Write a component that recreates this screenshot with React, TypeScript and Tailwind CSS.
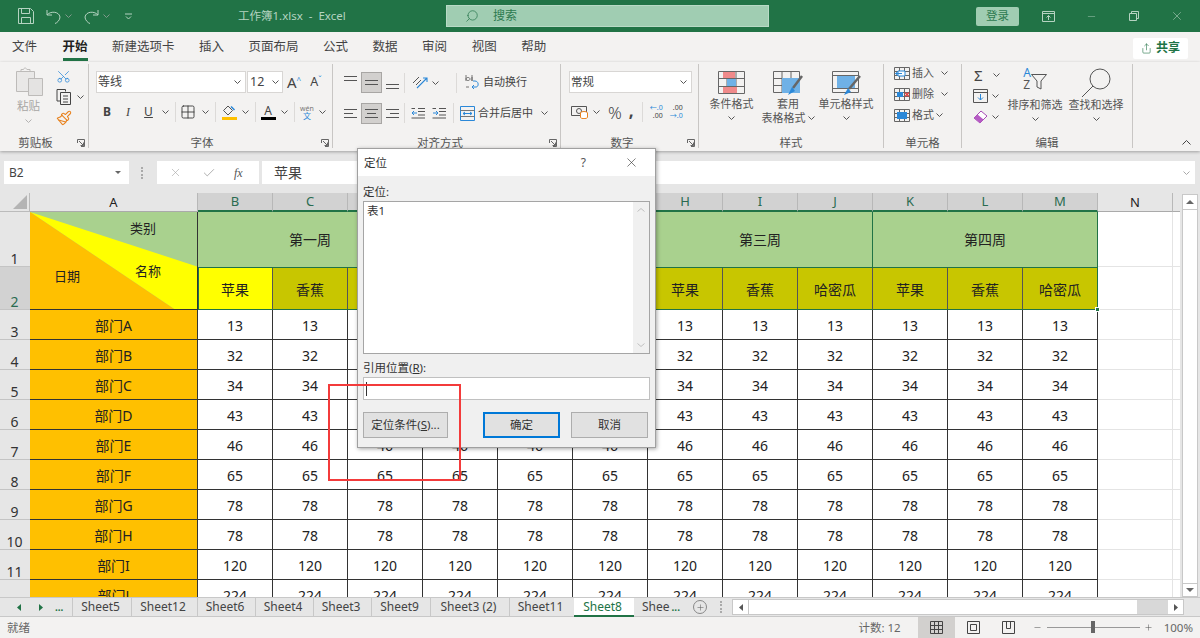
import type { ReactNode } from "react";
import { Scissors, Paintbrush, Grid2x2, Search, Minus, X, Plus, Share, Check } from "lucide-react";

const colLetters = ["B", "C", "D", "E", "F", "G", "H", "I", "J", "K", "L", "M"];
const fruits = ["苹果", "香蕉", "哈密瓜"];
const rows = [
  ["部门A", "13"],
  ["部门B", "32"],
  ["部门C", "34"],
  ["部门D", "43"],
  ["部门E", "46"],
  ["部门F", "65"],
  ["部门G", "78"],
  ["部门H", "78"],
  ["部门I", "120"],
  ["部门J", "224"],
];
const tabs = [
  ["Sheet5", "w-[59px]"],
  ["Sheet12", "w-[66px]"],
  ["Sheet6", "w-[58px]"],
  ["Sheet4", "w-[58px]"],
  ["Sheet3", "w-[58px]"],
  ["Sheet9", "w-[59px]"],
  ["Sheet3 (2)", "w-[79px]"],
  ["Sheet11", "w-[65px]"],
];

const Chev = ({ className = "" }: { className?: string }) => (
  <svg width="7" height="4" viewBox="0 0 7 4" className={`shrink-0 ${className}`} fill="none" stroke="#555" strokeWidth="1">
    <path d="M.5.5 3.5 3.5 6.5.5" />
  </svg>
);

const Launcher = () => (
  <svg width="8" height="8" viewBox="0 0 8 8" className="absolute right-[3px] bottom-[1px]" fill="none" stroke="#666" strokeWidth="1">
    <path d="M.5 4V.5H7.5V7.5H4M2 2 6.5 6.5M6.5 3.5V6.5H3.5" />
  </svg>
);

const Group = ({ className, labelClass = "", label, launcher, children }: { className: string; labelClass?: string; label: string; launcher?: boolean; children: ReactNode }) => (
  <div className={`relative h-[84px] shrink-0 border-r border-[#c8c6c4] flex flex-col ${className}`}>
    <div className="h-[71px] shrink-0">{children}</div>
    <div className={`text-[11.5px] leading-[15px] text-center text-[#555] ${labelClass}`}>{label}</div>
    {launcher && <Launcher />}
  </div>
);

const VSep = ({ className = "" }: { className?: string }) => <div className={`w-px h-[20px] bg-[#dcdad8] shrink-0 ${className}`} />;

const Lines = ({ kind }: { kind: "left" | "center" | "right" | "top" | "mid" | "bottom" }) => {
  const d = {
    left: "M1 3.5H14M1 7.5H10M1 11.5H14",
    center: "M1 3.5H14M3 7.5H12M1 11.5H14",
    right: "M1 3.5H14M5 7.5H14M1 11.5H14",
    top: "M1 1.5H14M1 5.5H14",
    mid: "M1 5.5H14M1 9.5H14",
    bottom: "M1 9.5H14M1 13.5H14",
  }[kind];
  return (
    <svg width="15" height="15" viewBox="0 0 15 15" fill="none" stroke="#555" strokeWidth="1.1">
      <path d={d} />
    </svg>
  );
};

const AlignBtn = ({ kind, on }: { kind: "left" | "center" | "right" | "top" | "mid" | "bottom"; on?: boolean }) => (
  <div className={`w-[21px] h-[21px] flex items-center justify-center border ${on ? "bg-[#d2d0ce] border-[#a8a6a4]" : "border-transparent"}`}>
    <Lines kind={kind} />
  </div>
);

const CellIcon = ({ type }: { type: "insert" | "delete" | "format" }) => (
  <svg width="16" height="15" viewBox="0 0 16 15" fill="none" className="shrink-0">
    <path d="M.5 1.5H15.5V13.5H.5ZM.5 5.5H15.5M.5 9.5H15.5M5.5 1.5V13.5M10.5 1.5V13.5" stroke="#666" />
    {type === "insert" && <path d="M4 5H11V10H4Z" fill="#fff" stroke="#2b88d8" />}
    {type === "insert" && <path d="M8 7.5H1.5M4 5.5 1.5 7.5 4 9.5" stroke="#2b88d8" />}
    {type === "delete" && <rect x="3" y="5" width="6" height="5" fill="#2b88d8" />}
    {type === "delete" && <path d="M11 5.5 15 9.5M15 5.5 11 9.5" stroke="#e03a3a" strokeWidth="1.3" />}
    {type === "format" && <rect x="3" y="4" width="10" height="7" fill="#2b88d8" />}
  </svg>
);

const Ribbon = () => (
  <div className="h-[89px] bg-[#f3f2f1] flex items-start pt-[2px] shadow-[0_1px_3px_rgba(0,0,0,0.3)] relative z-10 shrink-0">
    <Group className="w-[89px]" labelClass="pr-[17px]" label="剪贴板" launcher>
      <div className="flex pt-[3px]">
        <div className="w-[56px] flex flex-col items-center pl-[1px]">
          <svg width="28" height="30" viewBox="0 0 28 30" fill="none">
            <path d="M1.5 4.5H19.5V24.5H1.5Z" fill="#e9e8e7" stroke="#bdbbb9" />
            <path d="M6 4.5H15V2.5H12C11 .5 9 .5 8.5 2.5H6Z" fill="#f3f2f1" stroke="#bdbbb9" />
            <path d="M13.5 11.5H27.5V28.5H13.5Z" fill="#e4e3e2" stroke="#bdbbb9" />
          </svg>
          <div className="text-[11.5px] text-[#a8a6a4] mt-[1px] leading-[16px]">粘贴</div>
          <Chev className="mt-[5px] opacity-40" />
        </div>
        <div className="flex flex-col items-start pt-[2px] gap-[5px]">
          <Scissors size={15} strokeWidth={1.2} className="text-[#2b88d8] -rotate-90" />
          <div className="flex items-center gap-[6px]">
            <svg width="15" height="16" viewBox="0 0 15 16" fill="none" stroke="#444">
              <path d="M9.5 2.5V.5H1V12H4M4.5 3.5H14.5V15.5H4.5ZM7 7H12M7 10H12M7 13H12" />
            </svg>
            <Chev />
          </div>
          <Paintbrush size={16} strokeWidth={1.6} className="text-[#e8821e]" />
        </div>
      </div>
    </Group>

    <Group className="w-[244px]" labelClass="pr-[17px]" label="字体" launcher>
      <div className="flex items-center pt-[7px] pl-[7px]">
        <div className="w-[150px] h-[22px] bg-white border border-[#d8d6d4] flex items-center justify-between px-[1px] pr-[4px] text-[12px] text-[#444]">
          <span>等线</span>
          <Chev />
        </div>
        <div className="w-[36px] h-[22px] ml-[1px] bg-white border border-[#d8d6d4] flex items-center justify-between pl-[2px] pr-[3px] text-[12.5px] text-[#444]">
          <span>12</span>
          <Chev />
        </div>
        <span className="ml-[4px] text-[15px] leading-none text-[#444]">A</span>
        <span className="text-[8px] text-[#2b88d8] self-start mt-[3px] mr-[6px]">^</span>
        <span className="ml-[3px] text-[12.5px] leading-none text-[#444]">A</span>
        <span className="text-[8px] text-[#2b88d8] self-start mt-[3px]">ˇ</span>
      </div>
      <div className="flex items-center h-[22px] mt-[8px] text-[#444]">
        <span className="ml-[13px] w-[10px] text-center text-[12px] font-bold">B</span>
        <span className="ml-[11px] w-[10px] text-center text-[12px] italic font-['Liberation_Serif',serif]">I</span>
        <span className="ml-[10px] w-[11px] text-center text-[12px] underline">U</span>
        <Chev className="ml-[8px]" />
        <VSep className="ml-[6px]" />
        <Grid2x2 size={16} strokeWidth={1.3} className="ml-[4px] text-[#333]" />
        <Chev className="ml-[6px]" />
        <VSep className="ml-[6px]" />
        <div className="ml-[5px] w-[16px] flex flex-col items-center">
          <svg width="14" height="11" viewBox="0 0 14 11" fill="none">
            <path d="M6 1 1.5 5.5 6 10 10.5 5.5Z" stroke="#555" />
            <path d="M9 1.5 12.5 5" stroke="#2b88d8" strokeWidth="1.6" />
          </svg>
          <div className="w-[15px] h-[3px] bg-[#ffc000] mt-[1px]" />
        </div>
        <Chev className="ml-[5px]" />
        <VSep className="ml-[6px]" />
        <div className="ml-[4px] w-[16px] flex flex-col items-center">
          <span className="text-[12px] leading-[12px]">A</span>
          <div className="w-[15px] h-[3px] bg-black" />
        </div>
        <Chev className="ml-[5px]" />
        <VSep className="ml-[6px]" />
        <div className="ml-[5px] w-[14px] flex flex-col items-center leading-none">
          <span className="text-[7px] text-[#777]">wén</span>
          <span className="text-[8px] text-[#2b88d8]">文</span>
        </div>
        <Chev className="ml-[5px]" />
      </div>
    </Group>

    <Group className="w-[228px]" labelClass="pr-[13px]" label="对齐方式" launcher>
      <div className="flex items-center pt-[8px] pl-[7px] h-[29px]">
        <AlignBtn kind="top" />
        <AlignBtn kind="mid" on />
        <AlignBtn kind="bottom" />
        <VSep className="ml-[1px]" />
        <svg width="17" height="15" viewBox="0 0 17 15" fill="none" className="ml-[7px]">
          <path d="M1 8 7 2M4 10 9 5" stroke="#555" />
          <path d="M5 13 15 3M11 3H15V7" stroke="#2b88d8" strokeWidth="1.1" />
        </svg>
        <Chev className="ml-[3px]" />
        <VSep className="ml-[17px]" />
        <svg width="14" height="17" viewBox="0 0 14 17" fill="none" className="ml-[8px]">
          <path d="M1 1V7M1 5C1 3 5 3 5 5S1 7 1 5M7 3V7M7 1V7M1 13H4" stroke="#555" strokeWidth=".8" />
          <path d="M7 13H11C14 13 14 7 10 7H8M9 11 7 13 9 15" stroke="#2b88d8" />
        </svg>
        <span className="ml-[4px] text-[11px] text-[#444]">自动换行</span>
      </div>
      <div className="flex items-center pl-[7px] h-[22px] mt-[9px]">
        <AlignBtn kind="left" />
        <AlignBtn kind="center" on />
        <AlignBtn kind="right" />
        <VSep className="ml-[1px]" />
        <svg width="15" height="13" viewBox="0 0 15 13" fill="none" className="ml-[6px]">
          <path d="M7 1.5H14M7 4.5H14M7 8H14M.5 11H14M.5 1.5H4" stroke="#555" />
          <path d="M6 6H1M3 4 1 6 3 8" stroke="#2b88d8" />
        </svg>
        <svg width="15" height="13" viewBox="0 0 15 13" fill="none" className="ml-[6px]">
          <path d="M7 1.5H14M7 4.5H14M7 8H14M.5 11H14M.5 1.5H4" stroke="#555" />
          <path d="M1 6H6M4 4 6 6 4 8" stroke="#2b88d8" />
        </svg>
        <VSep className="ml-[6px]" />
        <svg width="15" height="15" viewBox="0 0 15 15" fill="none" className="ml-[6px]">
          <path d="M.5.5H14.5V14.5H.5Z" stroke="#2b88d8" />
          <path d="M.5 4.5H14.5M.5 10.5H14.5" stroke="#777" />
          <path d="M3 7.5H12M5 6 3 7.5 5 9M10 6 12 7.5 10 9" stroke="#2b88d8" />
        </svg>
        <span className="ml-[3px] text-[11px] text-[#444]">合并后居中</span>
        <Chev className="ml-[8px]" />
      </div>
    </Group>

    <Group className="w-[138px]" labelClass="pr-[15px]" label="数字" launcher>
      <div className="pt-[7px] pl-[8px]">
        <div className="w-[123px] h-[22px] bg-white border border-[#d8d6d4] flex items-center justify-between pl-[1px] pr-[4px] text-[11.5px] text-[#444]">
          <span>常规</span>
          <Chev />
        </div>
      </div>
      <div className="flex items-center h-[22px] mt-[8px] pl-[10px] text-[#444]">
        <svg width="17" height="14" viewBox="0 0 17 14" fill="none">
          <path d="M.5 1.5H15.5V10.5H.5Z" stroke="#555" />
          <circle cx="8" cy="6" r="2.5" stroke="#555" />
          <ellipse cx="13" cy="8" rx="3.5" ry="1.5" fill="#fff" stroke="#e8821e" />
          <path d="M9.5 8V12.5C10 14 16 14 16.5 12.5V8" fill="#fff" stroke="#e8821e" />
        </svg>
        <Chev className="ml-[5px]" />
        <span className="ml-[8px] text-[17px] leading-none font-light">%</span>
        <span className="ml-[7px] text-[17px] font-bold leading-none -mt-[4px]">,</span>
        <VSep className="ml-[8px]" />
        <span className="ml-[5px] flex flex-col text-[7px] leading-[8px] w-[15px] text-right">
          <span className="text-[#2b88d8]">←.0</span>
          <span>.00</span>
        </span>
        <span className="ml-[5px] flex flex-col text-[7px] leading-[8px] w-[15px] text-right">
          <span>.00</span>
          <span className="text-[#2b88d8]">→.0</span>
        </span>
      </div>
    </Group>

    <Group className="w-[185px]" label="样式">
      <div className="flex text-[11px] text-[#555] leading-[14px]">
        <div className="w-[62px] flex flex-col items-center pt-[7px] pl-[3px]">
          <svg width="27" height="23" viewBox="0 0 27 23" fill="none">
            <path d="M.5.5H26.5V22.5H.5ZM.5 7.5H26.5M.5 15.5H26.5M9 .5V22.5M18 .5V22.5" stroke="#666" />
            <rect x="5" y="1" width="12" height="6" fill="#f08a8a" />
            <rect x="9" y="8" width="9" height="7" fill="#6fb1e6" />
            <rect x="5" y="16" width="14" height="6" fill="#f08a8a" />
          </svg>
          <div className="mt-[3px]">条件格式</div>
          <Chev className="mt-[5px]" />
        </div>
        <div className="w-[54px] flex flex-col items-center pt-[7px]">
          <svg width="31" height="25" viewBox="0 0 31 25" fill="none">
            <path d="M.5.5H26.5V21.5H.5ZM.5 7.5H26.5M.5 14.5H26.5M9 .5V21.5M18 .5V21.5" stroke="#666" />
            <rect x="9" y="7" width="18" height="15" fill="#6fb1e6" />
            <path d="M29 5 20 17" stroke="#666" strokeWidth="2.5" />
            <path d="M19 16 15 24 22 20Z" fill="#2b88d8" />
          </svg>
          <div className="mt-[1px] whitespace-nowrap">套用</div>
          <div className="whitespace-nowrap flex items-center gap-[2px]">表格格式<Chev /></div>
        </div>
        <div className="w-[62px] flex flex-col items-center pt-[7px]">
          <svg width="29" height="25" viewBox="0 0 29 25" fill="none">
            <path d="M.5.5H26.5V21.5H.5ZM.5 4.5H26.5M.5 17.5H26.5" stroke="#666" />
            <rect x="5" y="5" width="18" height="12" fill="#6fb1e6" />
            <path d="M28 5 17 18" stroke="#666" strokeWidth="2.5" />
            <path d="M16 17 12 24 19 21Z" fill="#2b88d8" />
          </svg>
          <div className="mt-[1px] whitespace-nowrap">单元格样式</div>
          <Chev className="mt-[5px]" />
        </div>
      </div>
    </Group>

    <Group className="w-[78px]" label="单元格">
      <div className="flex flex-col pl-[10px] pt-[1px] gap-[5px] text-[11px] text-[#555] leading-[16px]">
        <div className="flex items-center">
          <CellIcon type="insert" />
          <span className="ml-[2px]">插入</span>
          <Chev className="ml-[7px]" />
        </div>
        <div className="flex items-center">
          <CellIcon type="delete" />
          <span className="ml-[2px]">删除</span>
          <Chev className="ml-[7px]" />
        </div>
        <div className="flex items-center">
          <CellIcon type="format" />
          <span className="ml-[2px]">格式</span>
          <Chev className="ml-[2px]" />
        </div>
      </div>
    </Group>

    <Group className="w-[171px]" label="编辑">
      <div className="flex">
        <div className="w-[43px] flex flex-col pl-[11px] pt-[2px] gap-[3px]">
          <div className="flex items-center h-[18px] gap-[5px]">
            <span className="text-[15px] text-[#444] leading-none w-[14px] ml-[1px]">Σ</span>
            <Chev />
          </div>
          <div className="flex items-center h-[18px] gap-[4px]">
            <svg width="15" height="14" viewBox="0 0 15 14" fill="none">
              <path d="M.5.5H14.5V13.5H.5ZM.5 3.5H14.5" stroke="#555" />
              <path d="M7.5 5V11M5 8.5 7.5 11 10 8.5" stroke="#2b88d8" />
            </svg>
            <Chev />
          </div>
          <div className="flex items-center h-[18px] gap-[4px]">
            <svg width="15" height="14" viewBox="0 0 15 14" fill="none">
              <path d="M1 8 8 1 14 6 7 13Z" fill="#fff" stroke="#a64ab5" />
              <path d="M1 8 4.5 4.5 10.5 9.5 7 13Z" fill="#b65cc4" />
            </svg>
            <Chev />
          </div>
        </div>
        <div className="w-[60px] flex flex-col items-center pt-[4px] text-[11px] text-[#555] leading-[14px]">
          <div className="flex items-start h-[30px]">
            <div className="flex flex-col text-[12px] leading-[12px] -mt-[1px]">
              <span className="text-[#2b88d8]">A</span>
              <span>Z</span>
            </div>
            <svg width="16" height="16" viewBox="0 0 16 16" fill="none" stroke="#555" className="mt-[6px]">
              <path d="M.5.5H15.5L10 7V15L6 13V7Z" />
            </svg>
          </div>
          <div className="whitespace-nowrap">排序和筛选</div>
          <Chev className="mt-[5px]" />
        </div>
        <div className="w-[62px] flex flex-col items-center pt-[4px] text-[11px] text-[#555] leading-[14px]">
          <svg width="30" height="30" viewBox="0 0 30 30" fill="none" stroke="#555">
            <circle cx="19" cy="11" r="10" />
            <path d="M12 18 1 29" />
          </svg>
          <div className="whitespace-nowrap">查找和选择</div>
          <Chev className="mt-[5px]" />
        </div>
      </div>
    </Group>

    <div className="flex-1 h-[84px] flex items-end justify-end pr-[9px] pb-[3px]">
      <svg width="9" height="5" viewBox="0 0 9 5" fill="none" stroke="#444">
        <path d="M.5 4.5 4.5.5 8.5 4.5" />
      </svg>
    </div>
  </div>
);

const FormulaBar = () => (
  <div className="h-[42px] bg-[#e6e6e6] flex items-center pl-[4px] pt-[1px] shrink-0 text-[#444]">
    <div className="w-[125px] h-[23px] bg-white flex items-center justify-between pl-[5px] pr-[8px] text-[12px]">
      <span>B2</span>
      <svg width="6" height="3" viewBox="0 0 6 3"><path d="M0 0H6L3 3Z" fill="#666" /></svg>
    </div>
    <div className="ml-[12px] w-[2px] h-[12px] border-l-2 border-dotted border-[#aaa]" />
    <div className="ml-[14px] w-[102px] h-[23px] bg-white flex items-center pl-[12px]">
      <X size={13} strokeWidth={1.2} className="text-[#aaa]" />
      <Check size={14} strokeWidth={1.6} className="ml-[20px] text-[#aaa]" />
      <span className="ml-[18px] text-[12px] italic font-['Liberation_Serif',serif] text-[#555]">fx</span>
    </div>
    <div className="ml-[3px] w-[933px] h-[23px] bg-white flex items-center justify-between pl-[12px] pr-[5px] text-[14px]">
      <span>苹果</span>
      <Chev className="opacity-50" />
    </div>
  </div>
);

const headCls = "border-r border-[#b8b8b8] flex items-center justify-center text-[13px] leading-none";
const rowHeadCls = "border-b border-[#c4c4c4] flex items-end justify-center pr-[1px] text-[14px] leading-none";
const dataCls = "border-r border-b border-[#333] flex items-center justify-center pt-[2px] text-[14px] text-[#222] bg-white";

const Sheet = () => (
  <div className="h-[404px] flex bg-[#e6e6e6] shrink-0 overflow-hidden">
    <div className="w-[1180px] h-[404px] overflow-hidden shrink-0 bg-white">
      <div className="relative grid grid-cols-[30px_168px_repeat(12,75px)_75px_7px] grid-rows-[19px_55px_43px_repeat(10,30px)] w-[1180px]">
        <div className="bg-[#e6e6e6] border-r border-b border-[#bbb] flex items-end justify-end p-[2px]">
          <svg width="14" height="14" viewBox="0 0 14 14"><path d="M14 0V14H0Z" fill="#b4b4b4" /></svg>
        </div>
        <div className={`${headCls} bg-[#e6e6e6] border-b border-b-[#aaa] text-[#222]`}>A</div>
        {colLetters.map((c) => (
          <div key={c} className={`${headCls} bg-[#d2d2d2] border-b-2 border-b-[#217346] text-[#2a6b50]`}>{c}</div>
        ))}
        <div className={`${headCls} bg-[#e6e6e6] border-b border-b-[#aaa] text-[#222]`}>N</div>
        <div className="bg-[#e6e6e6] border-b border-[#aaa]" />

        <div className={`${rowHeadCls} bg-[#e6e6e6] text-[#333]`}>1</div>
        <div className="relative row-span-2 border-b border-r border-[#333] overflow-hidden">
          <svg className="w-full h-full block" viewBox="0 0 168 98" preserveAspectRatio="none">
            <path d="M0 0H168V98H0Z" fill="#a9d18e" />
            <path d="M0 0 168 55V98H145Z" fill="#ffff00" />
            <path d="M0 0 145 98H0Z" fill="#ffc000" />
          </svg>
          <span className="absolute left-[100px] top-[7px] text-[13px] text-[#222]">类别</span>
          <span className="absolute left-[105px] top-[50px] text-[13px] text-[#222]">名称</span>
          <span className="absolute left-[24px] top-[55px] text-[13px] text-[#222]">日期</span>
        </div>
        {["第一周", "第二周", "第三周", "第四周"].map((w) => (
          <div key={w} className="col-span-3 bg-[#a9d18e] border-r border-[#217346] flex items-center justify-center text-[14px] text-[#222]">{w}</div>
        ))}
        <div className="border-b border-r border-[#e4e4e4]" />
        <div className="border-b border-[#e4e4e4]" />

        <div className={`${rowHeadCls} bg-[#d2d2d2] text-[#2a6b50]`}>2</div>
        {colLetters.map((c, i) => (
          <div key={c} className={`border-r border-[#555] flex items-center justify-center pt-[2px] text-[14px] text-[#222] ${i === 0 ? "bg-[#ffff00]" : "bg-[#c8c600]"}`}>{fruits[i % 3]}</div>
        ))}
        <div className="border-b border-r border-[#e4e4e4]" />
        <div className="border-b border-[#e4e4e4]" />

        {rows.map(([dept, val], idx) => (
          <div key={dept} className="contents">
            <div className={`${rowHeadCls} bg-[#e6e6e6] text-[#333]`}>{idx + 3}</div>
            <div className="bg-[#ffc000] border-r border-b border-[#333] flex items-center justify-center pt-[2px] text-[14px] text-[#222]">{dept}</div>
            {colLetters.map((c) => (
              <div key={c} className={dataCls}>{val}</div>
            ))}
            <div className="border-b border-r border-[#e4e4e4]" />
            <div className="border-b border-[#e4e4e4]" />
          </div>
        ))}

        {/* selection box over B2:M2 */}
        <div className="absolute col-start-3 col-end-15 row-start-3 row-end-4 top-0 bottom-0 left-0 right-0 border border-[#217346] pointer-events-none">
          <div className="absolute -right-[3px] -bottom-[3px] w-[5px] h-[5px] bg-[#217346] border border-white" />
        </div>
      </div>
    </div>
    <div className="w-[2px]" />
    <div className="w-[16px] flex flex-col bg-[#e6e6e6] shrink-0">
      <div className="h-[16px] mt-[1px] bg-white border border-[#c8c8c8] flex items-center justify-center">
        <svg width="8" height="4" viewBox="0 0 8 4"><path d="M0 4H8L4 0Z" fill="#666" /></svg>
      </div>
      <div className="flex-1 bg-white border-x border-[#c8c8c8]" />
      <div className="h-[14px] bg-white border border-[#c8c8c8] flex items-center justify-center">
        <svg width="8" height="4" viewBox="0 0 8 4"><path d="M0 0H8L4 4Z" fill="#666" /></svg>
      </div>
    </div>
  </div>
);

const TabBar = () => (
  <div className="h-[20px] bg-[#e6e6e6] border-t border-b border-[#c8c8c8] flex items-center shrink-0 text-[12px] text-[#444]">
    <div className="w-[72px] flex items-center pl-[17px] text-[#217346] shrink-0">
      <svg width="4" height="7" viewBox="0 0 4 7"><path d="M4 0V7L0 3.5Z" fill="#217346" /></svg>
      <svg width="4" height="7" viewBox="0 0 4 7" className="ml-[18px]"><path d="M0 0V7L4 3.5Z" fill="#217346" /></svg>
      <span className="ml-[12px] text-[10px] font-bold leading-none">...</span>
    </div>
    {tabs.map(([name, w]) => (
      <div key={name} className={`${w} h-full border-l border-[#c8c8c8] flex items-center justify-center pr-[3px] shrink-0`}>{name}</div>
    ))}
    <div className="w-[60px] h-[19px] -mb-px bg-white border-b-2 border-[#217346] flex items-center justify-center pr-[3px] text-[#217346] shrink-0">Sheet8</div>
    <div className="w-[59px] h-full flex items-center pl-[8px] shrink-0 whitespace-nowrap">
      Shee <span className="text-[#217346] ml-[2px] font-bold text-[10px]">...</span>
    </div>
    <div className="w-[14px] h-[14px] rounded-full border border-[#888] flex items-center justify-center shrink-0">
      <Plus size={9} strokeWidth={1.5} className="text-[#666]" />
    </div>
    <div className="ml-[13px] w-[2px] h-[12px] border-l-2 border-dotted border-[#aaa] shrink-0" />
    <div className="ml-[10px] w-[452px] h-[16px] border border-[#c8c8c8] bg-[#d8d8d8] flex items-center shrink-0">
      <div className="w-[15px] h-full bg-white flex items-center justify-center">
        <svg width="4" height="7" viewBox="0 0 4 7"><path d="M4 0V7L0 3.5Z" fill="#555" /></svg>
      </div>
      <div className="w-[389px] h-full bg-white border-l border-[#c8c8c8]" />
      <div className="ml-auto w-[15px] h-full bg-white flex items-center justify-center">
        <svg width="4" height="7" viewBox="0 0 4 7"><path d="M0 0V7L4 3.5Z" fill="#555" /></svg>
      </div>
    </div>
  </div>
);

const StatusBar = () => (
  <div className="h-[21px] bg-[#f3f2f1] flex items-center pl-[7px] shrink-0 text-[11.5px] text-[#666]">
    <span>就绪</span>
    <span className="ml-auto">计数: 12</span>
    <div className="ml-[17px] w-[37px] h-full bg-[#d2d0ce] flex items-center justify-center">
      <svg width="13" height="13" viewBox="0 0 13 13" fill="none" stroke="#444"><path d="M.5.5H12.5V12.5H.5ZM.5 4.5H12.5M.5 8.5H12.5M4.5.5V12.5M8.5.5V12.5" /></svg>
    </div>
    <div className="w-[37px] flex items-center justify-center">
      <svg width="13" height="13" viewBox="0 0 13 13" fill="none" stroke="#444"><path d="M.5.5H12.5V12.5H.5ZM3.5 3.5H9.5V9.5H3.5Z" /></svg>
    </div>
    <div className="w-[37px] flex items-center justify-center -ml-[2px]">
      <svg width="13" height="13" viewBox="0 0 13 13" fill="none" stroke="#444"><path d="M.5.5H12.5V12.5H.5ZM4.5.5V7.5H8.5V.5" /></svg>
    </div>
    <Minus size={9} strokeWidth={1.4} className="ml-[6px] text-[#555]" />
    <div className="ml-[5px] relative w-[93px] h-px bg-[#999]">
      <div className="absolute left-[44px] -top-[6px] w-[4px] h-[12px] bg-[#666]" />
    </div>
    <Plus size={9} strokeWidth={1.4} className="ml-[4px] text-[#555]" />
    <span className="ml-[11px] mr-[7px]">100%</span>
  </div>
);

const GoToDialog = () => (
  <div className="absolute left-[357px] top-[148px] w-[299px] h-[300px] bg-[#f0f0f0] border border-[#a0a0a0] shadow-[1px_1px_4px_rgba(0,0,0,0.35)] z-20 flex flex-col text-[#333]">
    <div className="h-[27px] bg-white flex items-center pl-[6px] text-[11.5px] shrink-0">
      <span>定位</span>
      <span className="ml-auto mr-[38px] text-[12px] text-[#555]">?</span>
      <X size={15} strokeWidth={1} className="mr-[16px] text-[#333]" />
    </div>
    <div className="px-[5px] flex flex-col text-[11.5px]">
      <div className="mt-[7px] h-[18px] leading-[18px]">定位:</div>
      <div className="h-[153px] bg-white border border-[#a5a5a5] flex">
        <div className="flex-1 pl-[3px] pt-[1px] text-[11.5px] leading-[16px]">表1</div>
        <div className="w-[16px] bg-[#f0f0f0] flex flex-col items-center justify-between py-[6px]">
          <svg width="8" height="4" viewBox="0 0 8 4" fill="none" stroke="#c0c0c0"><path d="M.5 3.5 4 .5 7.5 3.5" /></svg>
          <svg width="8" height="4" viewBox="0 0 8 4" fill="none" stroke="#c0c0c0"><path d="M.5.5 4 3.5 7.5.5" /></svg>
        </div>
      </div>
      <div className="mt-[5px] h-[18px] leading-[18px]">引用位置(<u>R</u>):</div>
      <div className="h-[23px] bg-white border border-[#c0c0c0] flex items-center pl-[2px]">
        <div className="w-px h-[14px] bg-[#333]" />
      </div>
      <div className="flex mt-[12px]">
        <div className="w-[85px] h-[26px] bg-[#e1e1e1] border border-[#adadad] flex items-center justify-center">定位条件(<u>S</u>)...</div>
        <div className="ml-[35px] w-[77px] h-[26px] bg-[#e1e1e1] border-2 border-[#0078d7] flex items-center justify-center">确定</div>
        <div className="ml-[11px] w-[77px] h-[26px] bg-[#e1e1e1] border border-[#adadad] flex items-center justify-center">取消</div>
      </div>
    </div>
  </div>
);

export default function App() {
  return (
    <div className="relative w-[1200px] h-[638px] overflow-hidden flex flex-col bg-[#e6e6e6] font-['Noto_Sans','Noto_Sans_CJK_SC',sans-serif]">
      {/* title bar */}
      <div className="h-[32px] bg-[#217346] flex items-center text-[#b5d3c1] shrink-0">
        <svg width="16" height="16" viewBox="0 0 16 16" fill="none" stroke="#b5d3c1" className="ml-[18px]">
          <path d="M.5.5H12.5L15.5 3.5V15.5H.5ZM3.5.5V5.5H11.5V.5M3.5 15.5V9.5H12.5V15.5" />
        </svg>
        <svg width="15" height="15" viewBox="0 0 15 15" fill="none" stroke="#b5d3c1" className="ml-[12px]">
          <path d="M1 1V6H6M1 6C4 2 13 2 14 8C14 11 11 14 9 14.5" />
        </svg>
        <Chev className="ml-[4px] opacity-70 invert" />
        <svg width="15" height="15" viewBox="0 0 15 15" fill="none" stroke="#b5d3c1" className="ml-[12px]">
          <path d="M14 1V6H9M14 6C11 2 2 2 1 8C1 11 4 14 6 14.5" />
        </svg>
        <Chev className="ml-[4px] opacity-70 invert" />
        <svg width="7" height="7" viewBox="0 0 7 7" fill="none" stroke="#b5d3c1" className="ml-[15px]">
          <path d="M0 1H7M1 3.5 3.5 6 6 3.5" />
        </svg>
        <span className="ml-[106px] w-[150px] text-[11.5px] whitespace-pre">工作簿1.xlsx  -  Excel</span>
        <div className="ml-[58px] w-[323px] h-[22px] bg-[#a0cdb2] border border-[#b8dac6] flex items-center pl-[18px] text-[12px] text-[#2d7a50]">
          <Search size={14} strokeWidth={1.3} className="-scale-x-100" />
          <span className="ml-[14px]">搜索</span>
        </div>
        <div className="ml-[207px] w-[43px] h-[19px] bg-[#a0cdb2] rounded-[2px] flex items-center justify-center text-[11.5px] text-[#2d7a50]">登录</div>
        <svg width="13" height="11" viewBox="0 0 13 11" fill="none" stroke="#b5d3c1" className="ml-[23px]">
          <path d="M.5.5H12.5V10.5H.5ZM.5 2.5H12.5M6.5 9V4.5M4.5 6.5 6.5 4.5 8.5 6.5" />
        </svg>
        <Minus size={11} strokeWidth={1} className="ml-[31px]" />
        <svg width="10" height="10" viewBox="0 0 10 10" fill="none" stroke="#b5d3c1" className="ml-[32px]">
          <path d="M.5 2.5H7.5V9.5H.5ZM2.5 2.5V.5H9.5V7.5H7.5" />
        </svg>
        <X size={14} strokeWidth={1} className="ml-[31px]" />
      </div>

      {/* menu tabs */}
      <div className="h-[30px] bg-[#f3f2f1] flex items-center text-[12.5px] text-[#444] pl-[12px] gap-[24.5px] shrink-0 relative">
        <span>文件</span>
        <span className="ml-[1px] font-bold text-[#222] h-[26px] mt-[2px] leading-[24px] border-b-[3px] border-[#217346]">开始</span>
        <span>新建选项卡</span>
        <span>插入</span>
        <span>页面布局</span>
        <span>公式</span>
        <span>数据</span>
        <span>审阅</span>
        <span>视图</span>
        <span>帮助</span>
        <div className="ml-auto mr-[12px] w-[55px] h-[21px] mt-[2px] bg-white rounded-[2px] flex items-center justify-center gap-[4px] text-[#217346] font-bold text-[12px]">
          <Share size={11} strokeWidth={1.3} />
          共享
        </div>
      </div>

      <Ribbon />
      <FormulaBar />
      <Sheet />
      <TabBar />
      <StatusBar />
      <GoToDialog />
      {/* red annotation */}
      <div className="absolute left-[328px] top-[384px] w-[133px] h-[97px] border-2 border-[#f33b3b] z-30 pointer-events-none" />
    </div>
  );
}
